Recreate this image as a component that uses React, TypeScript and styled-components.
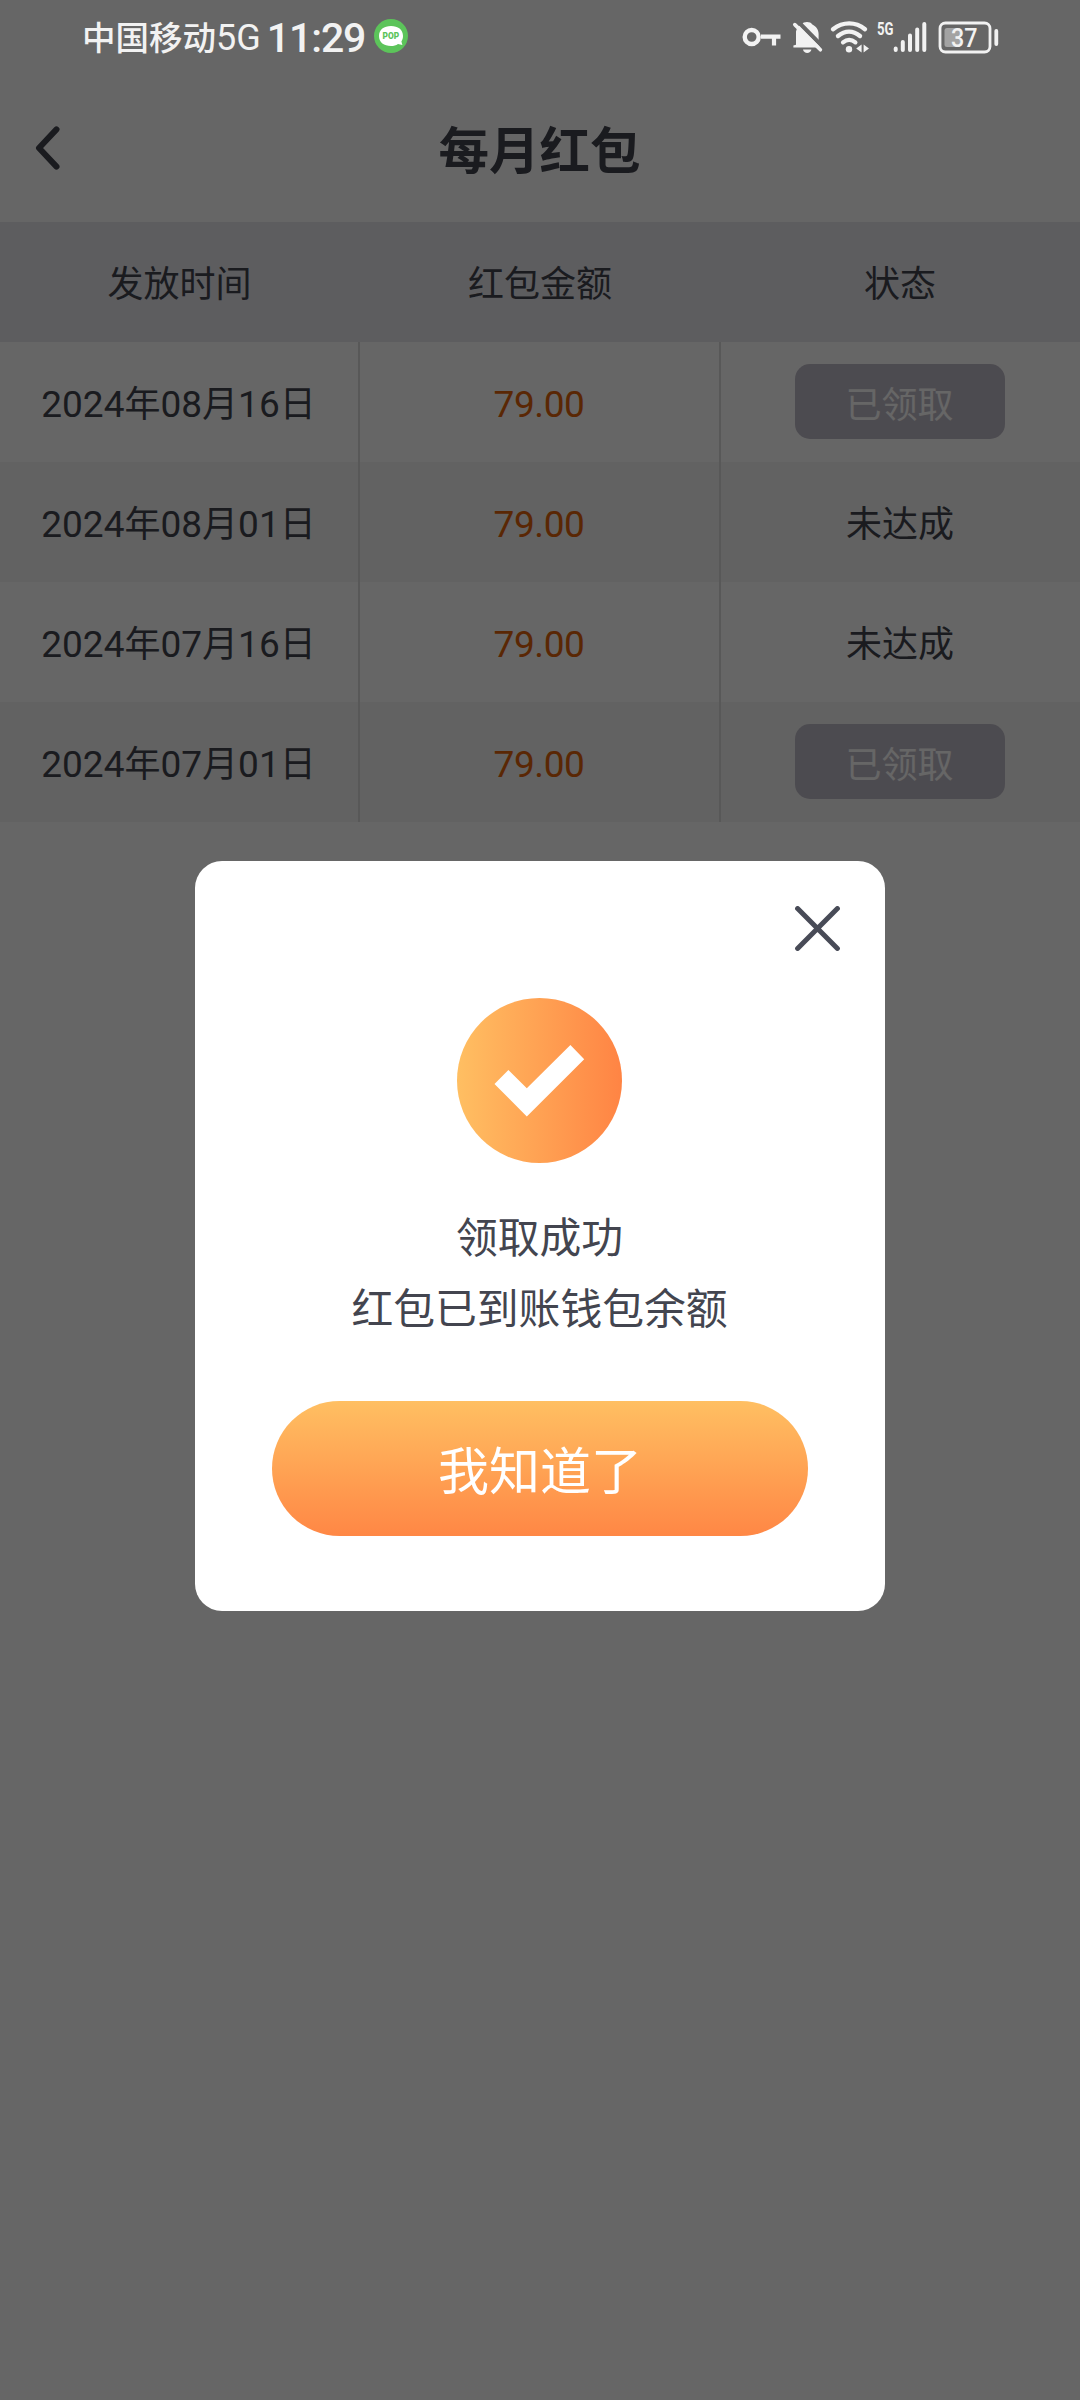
import React from "react";
import styled, { createGlobalStyle } from "styled-components";

const CJK = `"Noto Sans CJK SC", "Noto Sans", sans-serif`;

const GlobalStyle = createGlobalStyle`
  html, body { margin: 0; padding: 0; background: #fff; }
  * { box-sizing: border-box; }
  body { font-family: ${CJK}; color: #43454f; }
`;

const Screen = styled.div`
  position: relative;
  width: 1080px;
  height: 2400px;
  overflow: hidden;
  background: #ffffff;
`;

const NavBar = styled.header`
  display: grid;
  grid-template-columns: 120px 1fr 120px;
  align-items: center;
  height: 222px;
  padding-top: 74px;
`;

const BackButton = styled.button`
  display: flex;
  width: 70px;
  height: 60px;
  padding: 0 0 0 35px;
  border: 0;
  background: none;
  align-items: center;
`;

const Title = styled.h1`
  margin: 0 1px 3px 0;
  font-size: 50.5px;
  line-height: 74px;
  font-weight: 700;
  text-align: center;
`;

const Table = styled.section`
  display: flex;
  flex-direction: column;
`;

const Row = styled.div<{ $bg: string }>`
  display: grid;
  grid-template-columns: 360px 361px 359px;
  height: 120px;
  background: ${(p) => p.$bg};
`;

const Cell = styled.div<{ $divider?: boolean; $color?: string }>`
  display: flex;
  align-items: center;
  justify-content: center;
  padding: 0 1px 2px 0;
  font-size: 36px;
  line-height: 52px;
  white-space: nowrap;
  color: ${(p) => p.$color ?? "inherit"};
  border-right: ${(p) => (p.$divider ? "2px solid #dcdcdc" : "0")};
`;

const Num = styled.span<{ $tight?: boolean }>`
  padding-top: 7px;
  font-family: Roboto, ${CJK};
  font-size: 37px;
  letter-spacing: ${(p) => (p.$tight ? "-0.4px" : "0")};
`;

const Claimed = styled.span`
  display: flex;
  align-items: center;
  justify-content: center;
  width: 210px;
  height: 75px;
  margin-right: 1px;
  padding-top: 1px;
  border-radius: 15px;
  background: #bfbbc7;
  color: #ffffff;
`;

const Mask = styled.div`
  position: absolute;
  inset: 0;
  display: flex;
  flex-direction: column;
  align-items: center;
  background: rgba(0, 0, 0, 0.6);
`;

const StatusBar = styled.div`
  display: flex;
  flex: none;
  justify-content: space-between;
  width: 100%;
  height: 74px;
  padding: 0 80px 0 82px;
  color: #f2f2f2;
`;

const StatusGroup = styled.div`
  display: flex;
  align-items: center;
  height: 74px;
`;

const Carrier = styled.span`
  font-size: 33.5px;
  line-height: 48px;
  font-weight: 500;
`;

const CarrierNet = styled.span`
  font-family: Roboto, ${CJK};
  font-size: 36px;
  font-weight: 400;
`;

const Clock = styled.span`
  width: 100px;
  margin-left: 6px;
  padding-top: 2px;
  font-family: Roboto, ${CJK};
  font-size: 41px;
  line-height: 48px;
  font-weight: 500;
  letter-spacing: -1.1px;
`;

const PopBadge = styled.svg`
  margin: 0 0 2px 7px;
`;

const Dialog = styled.section`
  position: relative;
  display: flex;
  flex: none;
  flex-direction: column;
  align-items: center;
  width: 690px;
  height: 750px;
  margin-top: 787px;
  padding-top: 137px;
  border-radius: 27px;
  background: #ffffff;
`;

const SuccessIcon = styled.svg`
  margin-right: 1px;
`;

const CloseButton = styled.button`
  position: absolute;
  top: 45px;
  right: 45px;
  display: flex;
  padding: 0;
  border: 0;
  background: none;
`;

const Message = styled.p`
  margin: 37px 1px 0 0;
  font-size: 41.8px;
  line-height: 71px;
  text-align: center;
`;

const Confirm = styled.button`
  display: flex;
  align-items: center;
  justify-content: center;
  width: 536px;
  height: 135px;
  margin-top: 59px;
  padding: 0 0 1px;
  border: 0;
  border-radius: 68px;
  background: linear-gradient(180deg, #ffbf62 0%, #ff8745 100%);
  color: #ffffff;
  font-family: ${CJK};
  font-size: 51px;
  line-height: 74px;
`;

type Entry = { year: string; month: string; day: string; amount: string; claimed: boolean };

const entries: Entry[] = [
  { year: "2024", month: "08", day: "16", amount: "79.00", claimed: true },
  { year: "2024", month: "08", day: "01", amount: "79.00", claimed: false },
  { year: "2024", month: "07", day: "16", amount: "79.00", claimed: false },
  { year: "2024", month: "07", day: "01", amount: "79.00", claimed: true },
];

const StatusIcons = () => (
  <svg width="260" height="44" viewBox="740 14 260 44" fill="none" stroke="#f2f2f2" strokeLinecap="round">
    <circle cx="751.7" cy="36" r="7" strokeWidth="4.4" />
    <path d="M761 35.6H780.5M774 36V44.5" strokeWidth="4.2" strokeLinecap="butt" />
    <path
      d="M796 43.8V30.5C796.4 27.8 798.6 24.6 802 23.2C803.2 20.4 810.8 20.4 812 23.2C816.6 25.4 818.6 29 818.6 33V43.5L820.4 46.4H793.4V44.6Z"
      fill="#f2f2f2"
      stroke="none"
    />
    <path d="M803 48.6H811.4C810.8 53.2 803.6 53.2 803 48.6Z" fill="#f2f2f2" stroke="none" />
    <path d="M797.5 20L824 47" stroke="#666666" strokeWidth="4" strokeLinecap="butt" />
    <path d="M794.8 23.6L820.4 48.8" strokeWidth="3.6" />
    <path d="M833 28.2C843 20.4 855.5 20.4 865 28.2" strokeWidth="4.4" />
    <path d="M838 35C845 29.2 853 29.2 860 35" strokeWidth="4.4" />
    <path d="M843 41.4C847 38.2 851.4 38.2 855.4 41.4" strokeWidth="4.2" />
    <circle cx="849" cy="48.2" r="3.2" fill="#f2f2f2" stroke="none" />
    <path d="M861.6 43.4V51.4L856.2 47.4ZM863.6 43.4L869 47.4L863.6 51.4Z" fill="#f2f2f2" stroke="none" />
    <text x="877" y="34.4" fill="#f2f2f2" stroke="none" fontFamily="Roboto, sans-serif" fontWeight="700" fontSize="18.5" textLength="16.5" lengthAdjust="spacingAndGlyphs">
      5G
    </text>
    <path d="M895.7 47.4V49M902.8 41V49M910 34.4V49M917.2 28.4V49M924.3 23V49" strokeWidth="4" />
    <rect x="940" y="22" width="50" height="29" rx="5.5" stroke="#f2f2f2" strokeWidth="2.8" />
    <path d="M947 27H960V46H947Q944.5 46 944.5 43.5V29.5Q944.5 27 947 27Z" fill="#a3a3a3" stroke="none" />
    <path d="M996.3 30V43" strokeWidth="3.8" />
    <text x="951" y="45.9" fill="#f2f2f2" stroke="none" fontFamily="Roboto, sans-serif" fontWeight="500" fontSize="25" textLength="26.5" lengthAdjust="spacingAndGlyphs">
      37
    </text>
  </svg>
);

export default function App() {
  return (
    <>
      <GlobalStyle />
      <Screen>
        <NavBar>
          <BackButton aria-label="返回">
            <svg width="26" height="44" viewBox="0 0 26 44" fill="none" stroke="#43454f" strokeWidth="6" strokeLinecap="round" strokeLinejoin="round">
              <path d="M21.5 3.4L4 22L21.5 40.6" />
            </svg>
          </BackButton>
          <Title>每月红包</Title>
        </NavBar>

        <Table>
          <Row $bg="#e8e8ed">
            <Cell>发放时间</Cell>
            <Cell>红包金额</Cell>
            <Cell>状态</Cell>
          </Row>
          {entries.map((e, i) => (
            <Row key={i} $bg={i % 2 ? "#f4f4f4" : "#ffffff"}>
              <Cell $divider>
                <Num>{e.year}</Num>年<Num>{e.month}</Num>月<Num>{e.day}</Num>日
              </Cell>
              <Cell $divider $color="#e2620a">
                <Num $tight>{e.amount}</Num>
              </Cell>
              <Cell>{e.claimed ? <Claimed>已领取</Claimed> : "未达成"}</Cell>
            </Row>
          ))}
        </Table>

        <Mask>
          <StatusBar>
            <StatusGroup>
              <Carrier>
                中国移动<CarrierNet>5G</CarrierNet>
              </Carrier>
              <Clock>11:29</Clock>
              <PopBadge width="34" height="34" viewBox="0 0 34 34">
                <circle cx="17" cy="17" r="17" fill="#5cc45a" />
                <path d="M17 7C24 7 29 10.6 29 17C29 19.4 28.4 21 27.4 22.4L28.4 26L24 25C22 26.4 19.8 27 17 27C10 27 5 23.4 5 17C5 10.6 10 7 17 7Z" fill="#fff" />
                <text x="8.6" y="20.4" fill="#5cc45a" fontFamily="Roboto, sans-serif" fontWeight="900" fontSize="9.5" textLength="16.6" lengthAdjust="spacingAndGlyphs">
                  POP
                </text>
              </PopBadge>
            </StatusGroup>
            <StatusGroup>
              <StatusIcons />
            </StatusGroup>
          </StatusBar>

          <Dialog role="dialog">
            <CloseButton aria-label="关闭">
              <svg width="45" height="45" viewBox="0 0 45 45" stroke="#484b57" strokeWidth="5" strokeLinecap="round">
                <path d="M2.6 2.6L42.4 42.4M42.4 2.6L2.6 42.4" />
              </svg>
            </CloseButton>
            <SuccessIcon width="165" height="165" viewBox="0 0 165 165">
              <defs>
                <linearGradient id="ok" x1="0" y1="0" x2="1" y2="0">
                  <stop offset="0" stopColor="#ffbf62" />
                  <stop offset="1" stopColor="#ff8444" />
                </linearGradient>
              </defs>
              <circle cx="82.5" cy="82.5" r="82.5" fill="url(#ok)" />
              <path d="M37.5 86L51.4 72L69.8 90.2L113.4 47L127.2 61.2L69.8 118.4Z" fill="#fff" />
            </SuccessIcon>
            <Message>
              领取成功
              <br />
              红包已到账钱包余额
            </Message>
            <Confirm>我知道了</Confirm>
          </Dialog>
        </Mask>
      </Screen>
    </>
  );
}
